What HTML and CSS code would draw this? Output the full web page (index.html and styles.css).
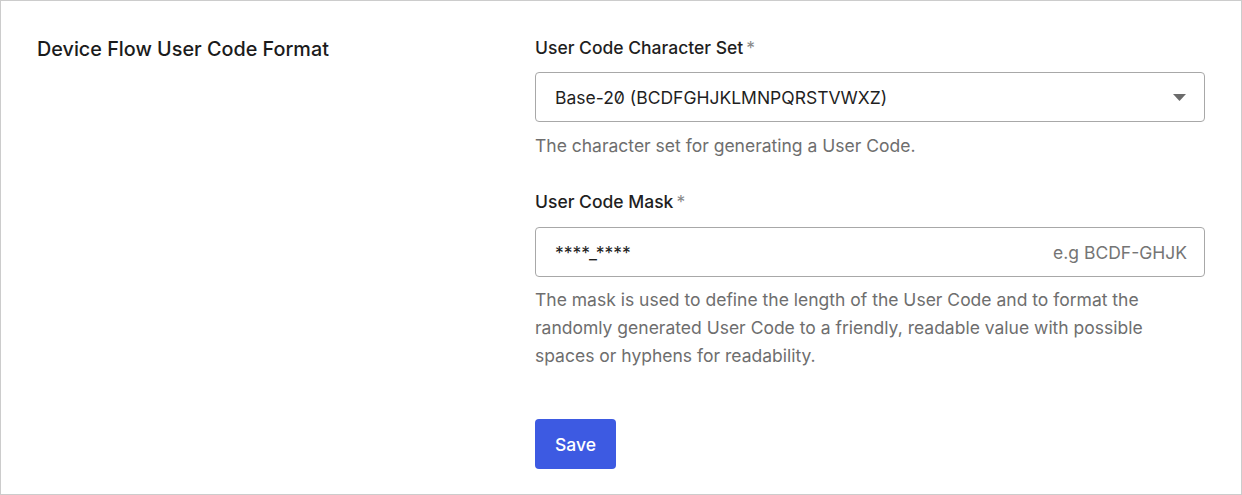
FILE: index.html
```html
<!DOCTYPE html>
<html>
<head>
<meta charset="utf-8">
<link rel="stylesheet" href="styles.css">
</head>
<body>
<div class="card">
  <div class="section-title">Device Flow User Code Format</div>
  <div class="fields">
    <div class="field">
      <label class="label">User Code Character Set<span class="req">*</span></label>
      <div class="select">
        <span class="select-value">Base-20 (BCDFGHJKLMNPQRSTVWXZ)</span>
        <svg class="caret" width="13" height="7" viewBox="0 0 13 7"><path d="M0 0 L13 0 L6.5 7 Z" fill="#6b6b6b"/></svg>
      </div>
      <p class="help">The character set for generating a User Code.</p>
    </div>
    <div class="field field-2">
      <label class="label">User Code Mask<span class="req">*</span></label>
      <div class="input">
        <span class="input-value">****_****</span>
        <span class="placeholder">e.g BCDF-GHJK</span>
      </div>
      <p class="help help-2">The mask is used to define the length of the User Code and to format the randomly generated User Code to a friendly, readable value with possible spaces or hyphens for readability.</p>
    </div>
    <button class="btn">Save</button>
  </div>
</div>
</body>
</html>
```
FILE: styles.css
```css
* { box-sizing: border-box; }
html, body { margin: 0; padding: 0; background: #fff; }
body { font-family: Inter, "Noto Sans", sans-serif; color: #1f1f1f; }
.card {
  width: 1242px;
  height: 495px;
  border: 1px solid #cccccc;
  padding: 35px 36px 0 36px;
  display: grid;
  grid-template-columns: 498px 670px;
}
.section-title {
  font-size: 19.8px;
  line-height: 26px;
  font-weight: 500;
  color: #1b1b1b;
}
.fields { display: flex; flex-direction: column; align-items: flex-start; }
.field { width: 100%; }
.field-2 { margin-top: 30px; }
.label {
  display: block;
  font-size: 17.5px;
  line-height: 24px;
  font-weight: 500;
  color: #1f1f1f;
}
.req { color: #8a8a8a; margin-left: 3px; font-weight: 400; }
.select, .input {
  height: 50px;
  border: 1px solid #a8a8a8;
  border-radius: 4px;
  display: flex;
  align-items: center;
  padding: 0 17px 0 19px;
  font-size: 17.5px;
}
.select { margin-top: 12px; justify-content: space-between; padding-right: 18px; }
.input { margin-top: 13px; justify-content: space-between; }
.select-value { color: #1f1f1f; font-feature-settings: "zero" 1; }
.caret { display: block; }
.input-value { color: #1f1f1f; font-size: 17.5px; }
.placeholder { color: #757575; }
.help {
  margin: 10px 0 0 0;
  font-size: 17.5px;
  line-height: 28px;
  color: #6e6e6e;
}
.help-2 { margin-top: 9px; }
.btn {
  margin-top: 49px;
  width: 81px;
  height: 50px;
  border: none;
  border-radius: 4px;
  background: #3d5ae2;
  color: #fff;
  font-family: Inter, sans-serif;
  font-size: 17.5px;
  font-weight: 500;
  padding: 0;
}
```
